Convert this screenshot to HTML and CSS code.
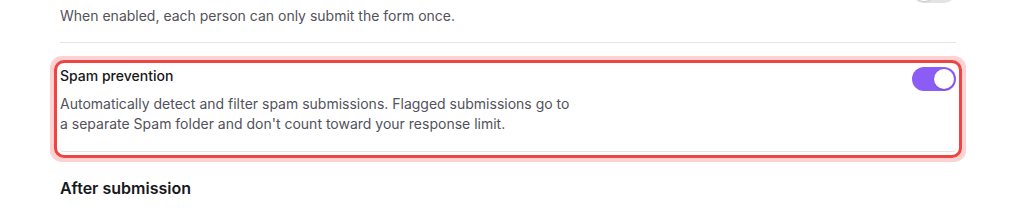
FILE: index.html
```html
<!DOCTYPE html>
<html lang="en">
<head>
    <meta charset="UTF-8">
    <meta name="viewport" content="width=device-width, initial-scale=1.0">
    <title>Form settings</title>
    <link rel="stylesheet" href="styles.css">
</head>
<body>
    <div class="settings">
        <div class="setting-row">
            <div class="setting-text">
                <div class="setting-title">One response per person</div>
                <p class="setting-desc">When enabled, each person can only submit the form once.</p>
            </div>
            <button class="toggle" aria-pressed="false"><span class="knob"></span></button>
        </div>

        <div class="setting-row highlighted">
            <div class="setting-text">
                <div class="setting-title">Spam prevention</div>
                <p class="setting-desc">Automatically detect and filter spam submissions. Flagged submissions go to a separate Spam folder and don't count toward your response limit.</p>
            </div>
            <button class="toggle on" aria-pressed="true"><span class="knob"></span></button>
        </div>

        <h2 class="section-title">After submission</h2>
    </div>
</body>
</html>
```

FILE: styles.css
```css
body {
    margin: 0;
    font-family: Inter, "Noto Sans", sans-serif;
    background: #fff;
    color: #18181b;
}

.settings {
    margin-top: -22px;
    padding: 0 64px 0 60px;
}

.setting-row {
    display: flex;
    justify-content: space-between;
    align-items: flex-start;
    gap: 24px;
    padding-bottom: 16px;
    border-bottom: 1px solid #e4e4e7;
    border-radius: 4px 4px 0 0;
}

.setting-row + .setting-row {
    margin-top: 23px;
}

.setting-row.highlighted {
    padding-bottom: 17px;
    border-radius: 4px;
    outline: 3px solid #ef4444;
    outline-offset: 3px;
    box-shadow: 0 0 0 3px #fff, 0 0 0 10px #fcd2d2;
}

.setting-title {
    font-size: 14px;
    line-height: 20px;
    font-weight: 500;
    color: #18181b;
}

.setting-desc {
    margin: 8px 0 0;
    max-width: 520px;
    font-size: 14px;
    line-height: 20px;
    color: #52525b;
}

.toggle {
    flex-shrink: 0;
    width: 44px;
    height: 24px;
    margin-top: 1px;
    padding: 2px;
    border: none;
    border-radius: 12px;
    background: #e4e4e7;
    display: flex;
    cursor: pointer;
}

.toggle .knob {
    width: 20px;
    height: 20px;
    border-radius: 50%;
    background: #fff;
    box-shadow: 0 1px 2px rgba(0,0,0,0.15);
}

.toggle.on {
    background: #8b5cf6;
    justify-content: flex-end;
}

.section-title {
    margin: 24px 0 0;
    font-size: 16px;
    line-height: 24px;
    font-weight: 600;
    color: #18181b;
}
```
